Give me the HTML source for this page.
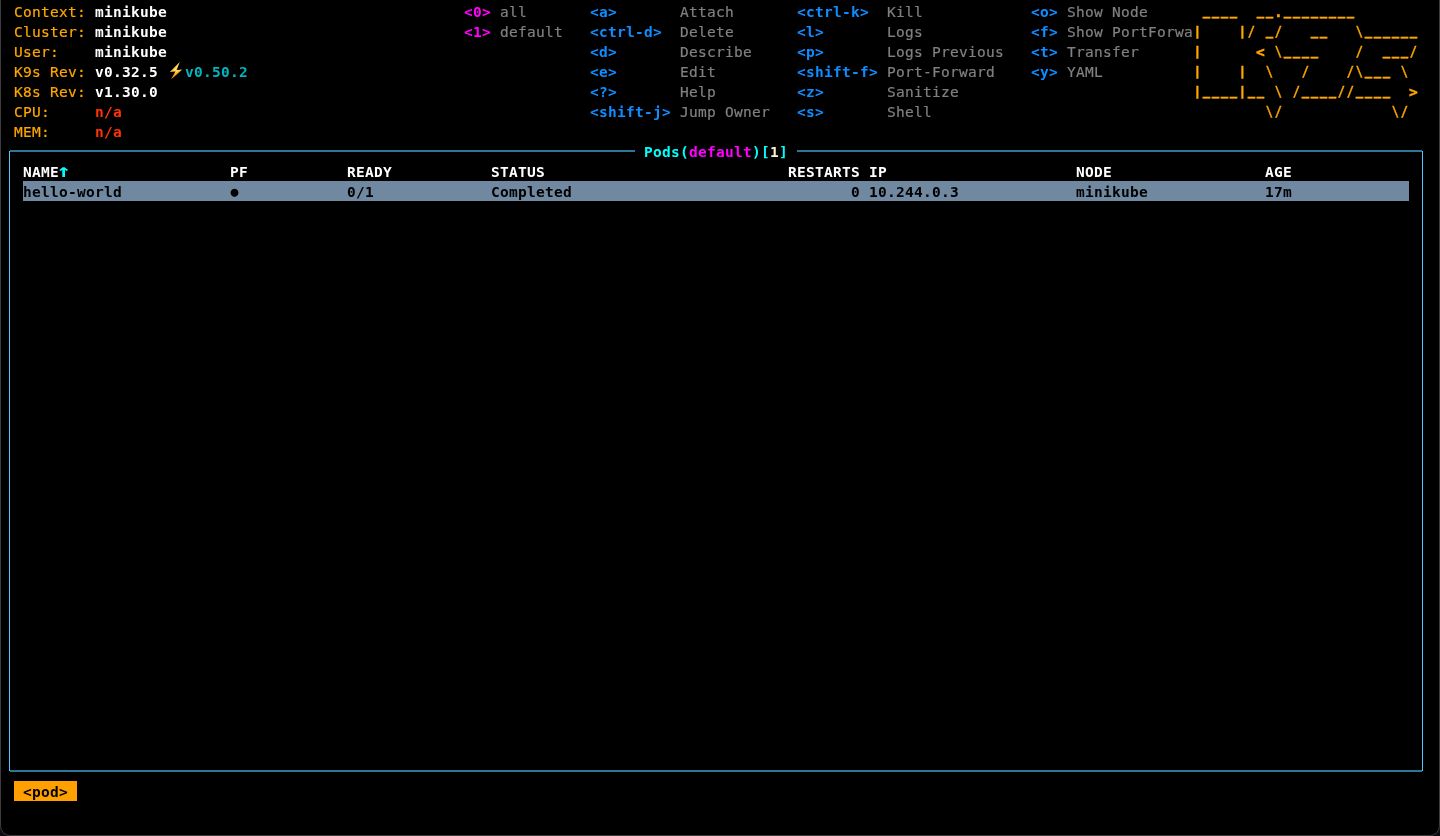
<!DOCTYPE html>
<html lang="en"><head><meta charset="utf-8"><title>k9s - Pods(default)</title>
<style>
html,body{margin:0;padding:0;background:#0d0a10;}
body{width:1440px;height:836px;overflow:hidden;position:relative;}
#win{position:absolute;left:0;top:-20px;width:1438px;height:854px;background:#000;border:1px solid #3c3c3c;border-radius:10px;}
#term{position:absolute;left:0;top:0;width:1440px;height:836px;font-family:"DejaVu Sans Mono","Liberation Mono",monospace;font-size:14.5px;letter-spacing:0.2703px;-webkit-text-stroke:0.2px;line-height:20px;color:#fff;will-change:transform;}
.s{position:absolute;white-space:pre;height:20px;}
.b{font-weight:bold;-webkit-text-stroke:0;}
.s i{display:inline-block;width:9px;font-style:normal;letter-spacing:0;}
.arr{font:bold 23px/20px "DejaVu Sans Mono","Liberation Mono",monospace;letter-spacing:0;-webkit-text-stroke:0;transform:scale(1.08,.78);transform-origin:50% 100%;}
.dot{font-size:13.33px;letter-spacing:0;}
.s.lg{-webkit-text-stroke:0.4px;}
.u{transform:translateY(-1.8px) scaleX(.85);}
.sl{transform:translateY(-.6px) scale(.82,.945);transform-origin:50% 10.65px;}
.p{transform:scaleY(.845);transform-origin:50% 4px;}
.ln{position:absolute;}
</style></head><body>
<div id="win"></div>
<div id="term">

<div class="ln" style="left:23px;top:181px;width:1386px;height:20px;background:#7088a0"></div>
<div class="ln" style="left:14px;top:781px;width:63px;height:20px;background:#ffa000"></div>
<div class="ln" style="left:10px;top:150px;width:625px;height:2px;background:#2b7896"></div>
<div class="ln" style="left:797px;top:150px;width:625px;height:2px;background:#2b7896"></div>
<div class="ln" style="left:10px;top:770px;width:1412px;height:2px;background:#2b7896"></div>
<div class="ln" style="left:9px;top:151px;width:1px;height:620px;background:#4cc6ff"></div>
<div class="ln" style="left:1422px;top:151px;width:1px;height:620px;background:#4cc6ff"></div>
<span class="s" style="left:14px;top:2px;color:#ffa500">Context:</span>
<span class="s b" style="left:95px;top:2px;color:#ffffff">minikube</span>
<span class="s" style="left:14px;top:22px;color:#ffa500">Cluster:</span>
<span class="s b" style="left:95px;top:22px;color:#ffffff">minikube</span>
<span class="s" style="left:14px;top:42px;color:#ffa500">User:</span>
<span class="s b" style="left:95px;top:42px;color:#ffffff">minikube</span>
<span class="s" style="left:14px;top:62px;color:#ffa500">K9s Rev:</span>
<span class="s b" style="left:95px;top:62px;color:#ffffff">v0.32.5</span>
<span class="s" style="left:14px;top:82px;color:#ffa500">K8s Rev:</span>
<span class="s b" style="left:95px;top:82px;color:#ffffff">v1.30.0</span>
<span class="s" style="left:14px;top:102px;color:#ffa500">CPU:</span>
<span class="s b" style="left:95px;top:102px;color:#ff3305">n/a</span>
<span class="s" style="left:14px;top:122px;color:#ffa500">MEM:</span>
<span class="s b" style="left:95px;top:122px;color:#ff3305">n/a</span>
<span class="s b" style="left:185px;top:62px;color:#00b6be">v0.50.2</span>
<span class="s b" style="left:464px;top:2px;color:#ff00ff">&lt;0&gt;</span>
<span class="s" style="left:500px;top:2px;color:#808080">all</span>
<span class="s b" style="left:464px;top:22px;color:#ff00ff">&lt;1&gt;</span>
<span class="s" style="left:500px;top:22px;color:#808080">default</span>
<span class="s b" style="left:590px;top:2px;color:#0f8cff">&lt;a&gt;</span>
<span class="s" style="left:680px;top:2px;color:#808080">Attach</span>
<span class="s b" style="left:590px;top:22px;color:#0f8cff">&lt;ctrl-d&gt;</span>
<span class="s" style="left:680px;top:22px;color:#808080">Delete</span>
<span class="s b" style="left:590px;top:42px;color:#0f8cff">&lt;d&gt;</span>
<span class="s" style="left:680px;top:42px;color:#808080">Describe</span>
<span class="s b" style="left:590px;top:62px;color:#0f8cff">&lt;e&gt;</span>
<span class="s" style="left:680px;top:62px;color:#808080">Edit</span>
<span class="s b" style="left:590px;top:82px;color:#0f8cff">&lt;?&gt;</span>
<span class="s" style="left:680px;top:82px;color:#808080">Help</span>
<span class="s b" style="left:590px;top:102px;color:#0f8cff">&lt;shift-j&gt;</span>
<span class="s" style="left:680px;top:102px;color:#808080">Jump Owner</span>
<span class="s b" style="left:797px;top:2px;color:#0f8cff">&lt;ctrl-k&gt;</span>
<span class="s" style="left:887px;top:2px;color:#808080">Kill</span>
<span class="s b" style="left:797px;top:22px;color:#0f8cff">&lt;l&gt;</span>
<span class="s" style="left:887px;top:22px;color:#808080">Logs</span>
<span class="s b" style="left:797px;top:42px;color:#0f8cff">&lt;p&gt;</span>
<span class="s" style="left:887px;top:42px;color:#808080">Logs Previous</span>
<span class="s b" style="left:797px;top:62px;color:#0f8cff">&lt;shift-f&gt;</span>
<span class="s" style="left:887px;top:62px;color:#808080">Port-Forward</span>
<span class="s b" style="left:797px;top:82px;color:#0f8cff">&lt;z&gt;</span>
<span class="s" style="left:887px;top:82px;color:#808080">Sanitize</span>
<span class="s b" style="left:797px;top:102px;color:#0f8cff">&lt;s&gt;</span>
<span class="s" style="left:887px;top:102px;color:#808080">Shell</span>
<span class="s b" style="left:1031px;top:2px;color:#0f8cff">&lt;o&gt;</span>
<span class="s" style="left:1067px;top:2px;color:#808080">Show Node</span>
<span class="s b" style="left:1031px;top:22px;color:#0f8cff">&lt;f&gt;</span>
<span class="s" style="left:1067px;top:22px;color:#808080">Show PortForwa</span>
<span class="s b" style="left:1031px;top:42px;color:#0f8cff">&lt;t&gt;</span>
<span class="s" style="left:1067px;top:42px;color:#808080">Transfer</span>
<span class="s b" style="left:1031px;top:62px;color:#0f8cff">&lt;y&gt;</span>
<span class="s" style="left:1067px;top:62px;color:#808080">YAML</span>
<span class="s b lg" style="left:1193px;top:2px;color:#ffa500"> <i class="u">_</i><i class="u">_</i><i class="u">_</i><i class="u">_</i>  <i class="u">_</i><i class="u">_</i>.<i class="u">_</i><i class="u">_</i><i class="u">_</i><i class="u">_</i><i class="u">_</i><i class="u">_</i><i class="u">_</i><i class="u">_</i>       </span>
<span class="s b lg" style="left:1193px;top:22px;color:#ffa500"><i class="p">|</i>    <i class="p">|</i><i class="sl">/</i> <i class="u">_</i><i class="sl">/</i>   <i class="u">_</i><i class="u">_</i>   <i class="sl">\</i><i class="u">_</i><i class="u">_</i><i class="u">_</i><i class="u">_</i><i class="u">_</i><i class="u">_</i></span>
<span class="s b lg" style="left:1193px;top:42px;color:#ffa500"><i class="p">|</i>      &lt; <i class="sl">\</i><i class="u">_</i><i class="u">_</i><i class="u">_</i><i class="u">_</i>    <i class="sl">/</i>  <i class="u">_</i><i class="u">_</i><i class="u">_</i><i class="sl">/</i></span>
<span class="s b lg" style="left:1193px;top:62px;color:#ffa500"><i class="p">|</i>    <i class="p">|</i>  <i class="sl">\</i>   <i class="sl">/</i>    <i class="sl">/</i><i class="sl">\</i><i class="u">_</i><i class="u">_</i><i class="u">_</i> <i class="sl">\</i> </span>
<span class="s b lg" style="left:1193px;top:82px;color:#ffa500"><i class="p">|</i><i class="u">_</i><i class="u">_</i><i class="u">_</i><i class="u">_</i><i class="p">|</i><i class="u">_</i><i class="u">_</i> <i class="sl">\</i> <i class="sl">/</i><i class="u">_</i><i class="u">_</i><i class="u">_</i><i class="u">_</i><i class="sl">/</i><i class="sl">/</i><i class="u">_</i><i class="u">_</i><i class="u">_</i><i class="u">_</i>  &gt;</span>
<span class="s b lg" style="left:1193px;top:102px;color:#ffa500">        <i class="sl">\</i><i class="sl">/</i>            <i class="sl">\</i><i class="sl">/</i> </span>
<span class="s b" style="left:644px;top:142px;color:#00ffff">Pods(</span>
<span class="s b" style="left:689px;top:142px;color:#ff00ff">default</span>
<span class="s b" style="left:752px;top:142px;color:#00ffff">)[</span>
<span class="s b" style="left:770px;top:142px;color:#ffefd5">1</span>
<span class="s b" style="left:779px;top:142px;color:#00ffff">]</span>
<span class="s b" style="left:23px;top:162px;color:#ffffff">NAME</span>
<span class="s b" style="left:230px;top:162px;color:#ffffff">PF</span>
<span class="s b" style="left:347px;top:162px;color:#ffffff">READY</span>
<span class="s b" style="left:491px;top:162px;color:#ffffff">STATUS</span>
<span class="s b" style="left:788px;top:162px;color:#ffffff">RESTARTS</span>
<span class="s b" style="left:869px;top:162px;color:#ffffff">IP</span>
<span class="s b" style="left:1076px;top:162px;color:#ffffff">NODE</span>
<span class="s b" style="left:1265px;top:162px;color:#ffffff">AGE</span>
<span class="s b" style="left:23px;top:182px;color:#000000">hello-world</span>
<span class="s b" style="left:347px;top:182px;color:#000000">0/1</span>
<span class="s b" style="left:491px;top:182px;color:#000000">Completed</span>
<span class="s b" style="left:851px;top:182px;color:#000000">0</span>
<span class="s b" style="left:869px;top:182px;color:#000000">10.244.0.3</span>
<span class="s b" style="left:1076px;top:182px;color:#000000">minikube</span>
<span class="s b" style="left:1265px;top:182px;color:#000000">17m</span>
<span class="s b" style="left:23px;top:782px;color:#000000">&lt;pod&gt;</span>
<span class="s arr" style="left:56.5px;top:159px;color:#00ffff">↑</span>
<span class="s b dot" style="left:230.4px;top:182px;color:#000000">●</span>
<svg class="ln" style="left:167px;top:61px" width="18" height="20" viewBox="167 61 18 20"><defs><linearGradient id="bolt" x1="0" y1="0" x2="0" y2="1"><stop offset="0" stop-color="#ffe14d"/><stop offset="1" stop-color="#ff9500"/></linearGradient></defs><polygon fill="url(#bolt)" points="179.8,62 169.8,72 175.4,71.4 171,79.6 182.3,69.4 176.6,70"/><polygon fill="#fff3a0" opacity=".75" points="178.2,65.2 172.6,70.9 176.3,70.5 174.6,73.6 179.6,70 176,70.3"/></svg>
</div></body></html>
